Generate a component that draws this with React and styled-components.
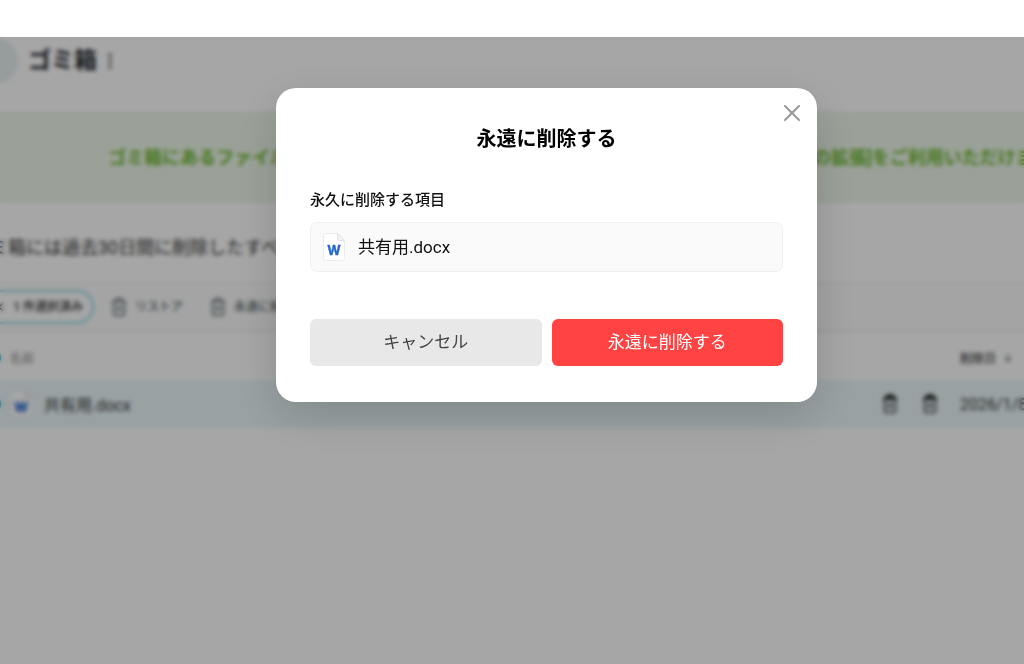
import React from 'react'
import styled, { createGlobalStyle } from 'styled-components'
import { ArrowDown, ChevronLeft, MoreVertical, X } from 'lucide-react'

const GlobalStyle = createGlobalStyle`
  body {
    margin: 0;
    background: #fff;
    color: #222;
    font-family: Roboto, 'Noto Sans CJK JP', sans-serif;
  }

  button {
    font-family: inherit;
    cursor: pointer;
  }
`

const Shell = styled.div`
  display: flex;
  flex-direction: column;
  min-height: 100vh;
  overflow: hidden;
`

const TopStrip = styled.div`
  height: 37px;
  background: #fff;
`

/* the page bleeds past both sides of the window */
const Page = styled.div`
  position: relative;
  flex: 1;
  margin: 0 -97px 0 -28px;
  background: #fff;
`

const Header = styled.header`
  display: flex;
  align-items: center;
  gap: 3px;
  padding: 1px 0 28px;
`

const BackButton = styled.button`
  display: flex;
  align-items: center;
  justify-content: center;
  width: 46px;
  height: 46px;
  padding: 0;
  border: 0;
  border-radius: 50%;
  background: #e8f0f2;
  color: #333;
`

const PageTitle = styled.h1`
  margin: 0 0 0 7px;
  font-size: 23px;
  line-height: 32px;
  font-weight: 700;
  color: #1c232b;
`

const PlainButton = styled.button`
  display: flex;
  align-items: center;
  gap: 7px;
  padding: 0;
  border: 0;
  background: none;
  color: ${props => props.$color || '#333'};
  font-size: 12px;
  line-height: 20px;
  font-weight: ${props => props.$weight || 500};
  white-space: nowrap;
`

const Banner = styled.div`
  padding: 32px 0 30px 136px;
  border: 1px solid #d6ecca;
  border-width: 1px 0;
  background: #eef8ea;
  color: #6cb82e;
  font-size: 18px;
  line-height: 26px;
  font-weight: 700;
  white-space: nowrap;
`

const Notice = styled.p`
  margin: 0;
  padding: 33px 0 21px;
  font-size: 18px;
  line-height: 26px;
  color: #333;
  white-space: nowrap;
`

const Toolbar = styled.div`
  display: flex;
  align-items: center;
  gap: 26px;
  padding: 7px 0 6px;
  border-top: 1px solid #f0f0f0;
  border-bottom: 2px solid #ebebeb;
  background: #fcfcfc;
`

const Chip = styled(PlainButton)`
  box-sizing: border-box;
  width: 122px;
  height: 34px;
  justify-content: flex-end;
  padding: 0 9px;
  margin-right: -10px;
  border: 2px solid #8fdbe4;
  border-radius: 17px;
  background: #fff;
`

const Files = styled.table`
  width: 100%;
  table-layout: fixed;
  border-collapse: collapse;
`

const HeadCell = styled.th`
  width: ${props => props.$width || 'auto'};
  height: 48px;
  padding: 3px 0 0;
  box-sizing: border-box;
  text-align: left;
  font-size: 12px;
  font-weight: ${props => props.$weight || 400};
  color: ${props => props.$color || '#888'};
`

const Cell = styled.td`
  height: 48px;
  padding: 0;
  background: #ebf8fb;
  font-size: 16px;
  color: #333;
`

const Line = styled.div`
  display: flex;
  align-items: center;
  gap: ${props => props.$gap}px;
`

const NameLine = styled(Line)`
  padding-left: 4px;
`

const Check = styled.input`
  display: block;
  width: 20px;
  height: 20px;
  margin: 0 0 0 9px;
  appearance: none;
  border-radius: 50%;
  background: #16a3b0;
`

const Overlay = styled.div`
  position: absolute;
  inset: 0;
  display: flex;
  align-items: flex-start;
  justify-content: center;
  padding-top: 51px;
  background: rgba(0, 0, 0, 0.35);
  backdrop-filter: blur(2px);
`

const Dialog = styled.div`
  position: relative;
  box-sizing: border-box;
  width: 100%;
  max-width: 541px;
  padding: 36px 34px;
  border-radius: 20px;
  background: #fff;
  box-shadow: 0 14px 44px rgba(0, 0, 0, 0.16);
`

const CloseButton = styled.button`
  position: absolute;
  top: 11px;
  right: 11px;
  display: flex;
  padding: 0;
  border: 0;
  background: none;
  color: #999;
`

const DialogTitle = styled.h2`
  margin: 0;
  text-align: center;
  font-size: 20px;
  line-height: 30px;
  font-weight: 700;
  color: #000;
`

const Label = styled.p`
  margin: 35px 0 11px;
  font-size: 15px;
  line-height: 22px;
  font-weight: 500;
  color: #111;
`

const FileBox = styled.div`
  display: flex;
  align-items: center;
  gap: 13px;
  box-sizing: border-box;
  height: 50px;
  padding: 0 12px;
  border: 1px solid #f0f0f0;
  border-radius: 7px;
  background: #fafafa;
  font-size: 17px;
  line-height: 26px;
  color: #111;
`

const Actions = styled.div`
  display: flex;
  gap: 10px;
  margin-top: 47px;
`

const ActionButton = styled.button`
  flex: 1;
  height: 47px;
  padding: 0 0 1px;
  border: 0;
  border-radius: 6px;
  background: ${props => props.$danger ? '#ff4343' : '#e8e8e8'};
  color: ${props => props.$danger ? '#fff' : '#444'};
  font-size: 17px;
  line-height: 26px;
`

const WordIcon = () => (
  <svg width="22" height="28" viewBox="0 0 22 28" aria-hidden="true">
    <path
      d="M3 .5h11.500l7 7V25a2.500 2.500 0 0 1-2.500 2.500H3A2.500 2.500 0 0 1 .5 25V3A2.500 2.500 0 0 1 3 .5z"
      fill="#fff"
      stroke="#ececec"
    />
    <path d="M14.500.5v4.500a2.500 2.500 0 0 0 2.500 2.500h4.500z" fill="#f4f4f4" stroke="#e2e2e2" />
    <text
      x="11"
      y="22"
      textAnchor="middle"
      fontFamily="Inter, sans-serif"
      fontSize="13"
      fontWeight="700"
      fill="#2467cf"
      stroke="#2467cf"
      strokeWidth=".4"
      strokeLinejoin="round"
    >W</text>
  </svg>
)

const TrashIcon = ({ weight = 1.5, lid = 1.5 }) => (
  <svg
    width="18"
    height="20"
    viewBox="0 0 18 20"
    fill="none"
    stroke="currentColor"
    strokeLinejoin="round"
    aria-hidden="true"
  >
    <path strokeWidth={lid} d="M2 4.500h14M6 4.500V3q0-1.500 1.500-1.500h3Q12 1.500 12 3v1.500" />
    <path strokeWidth={weight} d="M3.500 4.500v12q0 2 2 2h7q2 0 2-2v-12M7.500 8.500v6M10.500 8.500v6" />
  </svg>
)

const App = () => (
  <>
    <GlobalStyle />
    <Shell>
      <TopStrip />
      <Page>
        <Header>
          <BackButton aria-label="戻る"><ChevronLeft size={24} /></BackButton>
          <PageTitle>ゴミ箱</PageTitle>
          <PlainButton aria-label="メニュー" $color="#333">
            <MoreVertical size={20} />
          </PlainButton>
        </Header>
        <Banner>
          ゴミ箱にあるファイルは 30 日間保管された後自動的に完全削除されますが、 [保存期間の拡張]をご利用いただけます。
        </Banner>
        <Notice>ゴミ箱には過去30日間に削除したすべてのファイルが表示されます。</Notice>
        <Toolbar>
          <Chip><X size={14} />1 件選択済み</Chip>
          <PlainButton $color="#56666b"><TrashIcon />リストア</PlainButton>
          <PlainButton $color="#56666b"><TrashIcon />永遠に削除する</PlainButton>
        </Toolbar>
        <Files>
          <thead>
            <tr>
              <HeadCell $width="34px"><Check type="checkbox" defaultChecked aria-label="すべて選択" /></HeadCell>
              <HeadCell><NameLine>名前</NameLine></HeadCell>
              <HeadCell $width="79px" />
              <HeadCell $width="161px" $color="#444" $weight={500}>
                <Line $gap={6}>削除日<ArrowDown size={12} /></Line>
              </HeadCell>
            </tr>
          </thead>
          <tbody>
            <tr>
              <Cell><Check type="checkbox" defaultChecked aria-label="共有用.docx" /></Cell>
              <Cell>
                <NameLine $gap={12}><WordIcon />共有用.docx</NameLine>
              </Cell>
              <Cell>
                <Line $gap={22}>
                  <PlainButton aria-label="リストア"><TrashIcon lid={3} /></PlainButton>
                  <PlainButton aria-label="永遠に削除する"><TrashIcon lid={3} /></PlainButton>
                </Line>
              </Cell>
              <Cell>2026/1/8</Cell>
            </tr>
          </tbody>
        </Files>
        <Overlay>
          <Dialog role="dialog" aria-modal="true" aria-labelledby="dialog-title">
            <CloseButton aria-label="閉じる"><X size={28} strokeWidth={1.75} /></CloseButton>
            <DialogTitle id="dialog-title">永遠に削除する</DialogTitle>
            <Label>永久に削除する項目</Label>
            <FileBox><WordIcon />共有用.docx</FileBox>
            <Actions>
              <ActionButton>キャンセル</ActionButton>
              <ActionButton $danger>永遠に削除する</ActionButton>
            </Actions>
          </Dialog>
        </Overlay>
      </Page>
    </Shell>
  </>
)

export default App
